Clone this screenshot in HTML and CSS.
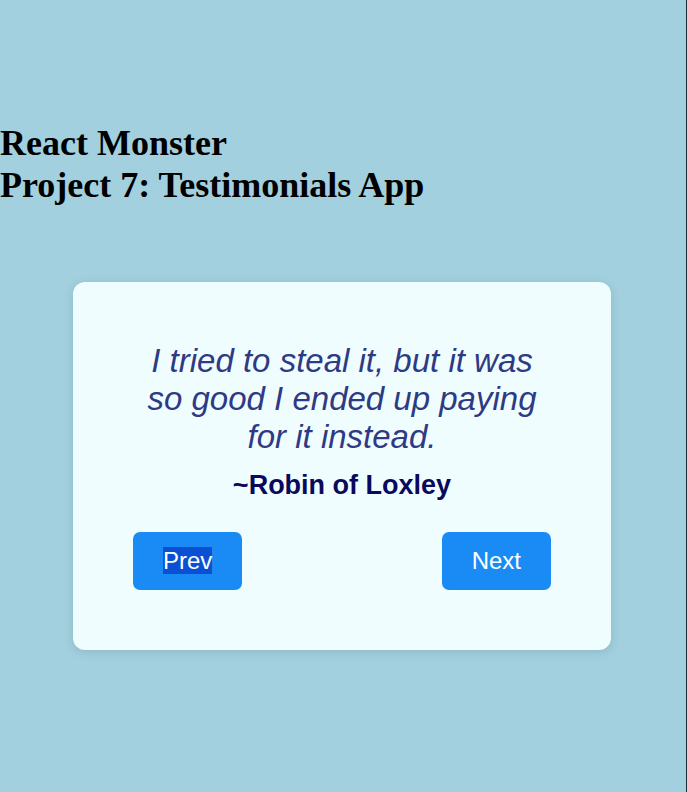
FILE: index.html
```html
<!DOCTYPE html>
<html lang="en">
<head>
<meta charset="utf-8">
<title>Testimonials App</title>
<link rel="stylesheet" href="styles.css">
</head>
<body>
<div class="app">
  <h1 class="title">React Monster<br>Project 7: Testimonials App</h1>
  <div class="card">
    <p class="quote">I tried to steal it, but it was so good I ended up paying for it instead.</p>
    <p class="author">~Robin of Loxley</p>
    <div class="actions">
      <button class="btn"><span class="selected">Prev</span></button>
      <button class="btn">Next</button>
    </div>
  </div>
</div>
</body>
</html>
```
FILE: styles.css
```css
html, body {
  margin: 0;
  padding: 0;
}
body {
  background: #a2d0de;
  min-height: 100vh;
  box-sizing: border-box;
  border-right: 1px solid #1d2f37;
}
.app {
  padding: 122px 2px 0 0;
}
.title {
  margin: 0;
  font-family: "Liberation Serif", "Times New Roman", serif;
  font-weight: 700;
  font-size: 36px;
  color: #000;
}
.card {
  width: 538px;
  box-sizing: border-box;
  margin: 76px auto 0;
  padding: 60px;
  background: #f0fdff;
  border-radius: 12px;
  box-shadow: 0 2px 10px rgba(40, 80, 100, 0.18);
  text-align: center;
  font-family: "Liberation Sans", Arial, sans-serif;
}
.quote {
  margin: 0;
  font-size: 33px;
  font-style: italic;
  color: #2e3a83;
}
.author {
  margin: 14px 0 0;
  font-size: 27px;
  font-weight: 700;
  color: #0a0a5c;
}
.actions {
  margin-top: 31px;
  display: flex;
  justify-content: space-between;
}
.btn {
  border: none;
  border-radius: 7px;
  background: #1a8bf5;
  color: #fff;
  font-family: "Liberation Sans", Arial, sans-serif;
  font-size: 24px;
  padding: 15px 30px;
  line-height: normal;
}
.selected {
  background: #0b4fd4;
}
```
